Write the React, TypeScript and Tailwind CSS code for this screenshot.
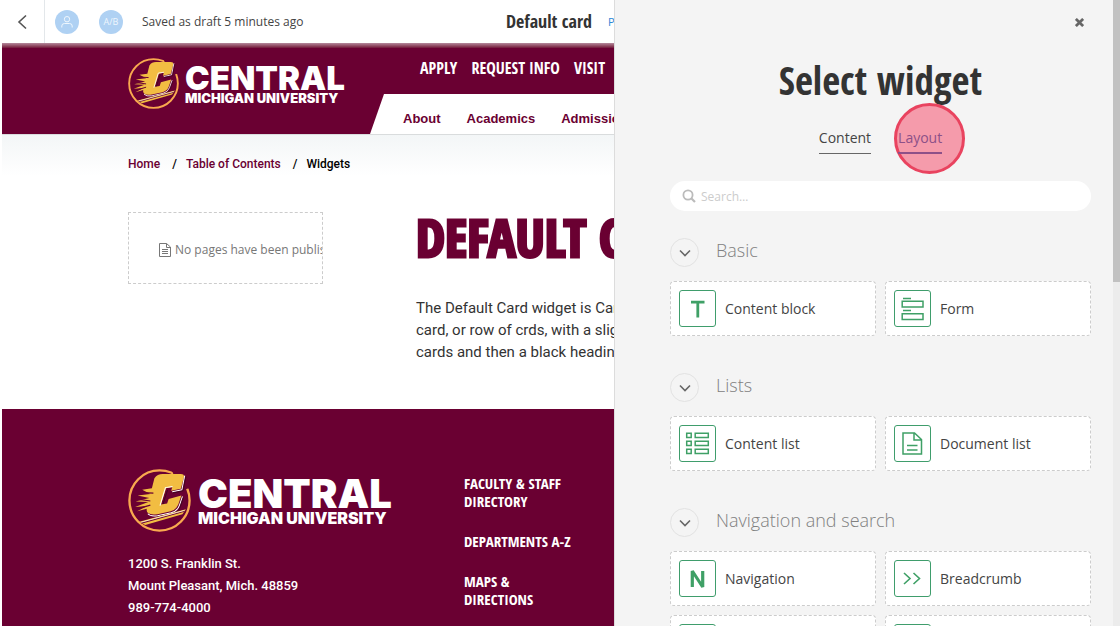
import type { ReactNode } from "react";

const condensed = "font-['Open_Sans_Condensed','Liberation_Sans_Narrow',sans-serif]";

function Emblem({ className }: { className: string }) {
  return (
    <svg viewBox="0 0 62 62" className={className} aria-hidden="true">
      <circle cx="31" cy="31" r="29.6" fill="none" stroke="#f9a94f" strokeWidth="2.3" />
      <path d="M43 0 L58 3 L60 19 L50 22 Z" fill="#6a0032" />
      <path d="M26 9 Q29 5 34 5 H52 Q55.5 5 55 8 L52 19.5 L42.5 21.5 L43.5 18 L37.5 19 L32.5 35 L38.5 34 L40 29.5 L52.5 26 L49.5 35 Q47.5 40 42 41.5 L29 44.5 Q17 46 18.5 39 L9 41.5 L19 36.5 L7 37.5 L20 32.5 L7.5 32 L21 28.5 L9.5 26 L22 24.5 L14 20.5 L23.5 19 Z" fill="#f2bd42" />
      <path d="M55.8 6.5 L53 20.5 L43.5 22.5 M43.8 17.3 L36.8 18.3 L31.5 36 M53.6 27 L50.5 36 Q48.5 41.5 42.5 43 L29 46 Q22 47 19.5 44" fill="none" stroke="#fff" strokeWidth="1" />
      <path d="M57 7.5 L54.2 21.5 L44 23.7 M39 20.5 L34.5 34.5 M54.6 28 L51.5 37 Q49.5 42.8 43 44.3 L29 47.2" fill="none" stroke="#3d0620" strokeWidth="0.9" />
      <path d="M10 23 L25 23.8 M7 29.5 L22 31.5 M10 39 L22 35.5" stroke="#6a0032" strokeWidth="1.2" fill="none" />
      <path d="M11 52 L57 39.5 L53.5 44.5 L17 55 Z" fill="#f2bd42" />
      <path d="M13 53.2 L55.5 41.6" stroke="#6a0032" strokeWidth="1.2" />
      <path d="M13 52.4 L55.5 40.8" stroke="#fff" strokeWidth="0.7" />
    </svg>
  );
}

function BoxIcon({ children }: { children: ReactNode }) {
  return (
    <span className="flex size-[37px] shrink-0 items-center justify-center rounded-[3px] border border-[#3f9d6c] bg-white">
      <svg viewBox="0 0 35 35" className="size-[35px]" fill="none" stroke="#3fa066" aria-hidden="true">
        {children}
      </svg>
    </span>
  );
}

const letterT = <path d="M11 11.2H24.5M17.8 11V26.5" strokeWidth="2.8" />;
const letterN = <path d="M12.3 26V10L22.7 26V10" strokeWidth="3.2" strokeLinejoin="bevel" />;
const form = (
  <>
    <path d="M8 7.5H16M8 19.5H16" strokeWidth="1.3" />
    <path d="M7.2 10.2H28V16H7.2ZM7.2 22.7H28V28.5H7.2Z" strokeWidth="1.5" />
  </>
);
const contentList = (
  <path
    d="M6.7 7.2H11.2V11.5H6.7ZM15.2 7.2H28.3V11.5H15.2ZM6.7 15.2H11.2V19.5H6.7ZM15.2 15.2H28.3V19.5H15.2ZM6.7 23.2H11.2V27.5H6.7ZM15.2 23.2H28.3V27.5H15.2Z"
    strokeWidth="1.5"
  />
);
const documentIcon = (
  <>
    <path d="M8 7H19.5L26.5 13.5V28H8ZM19 7.5V14H26.5" strokeWidth="1.5" />
    <path d="M12 19.5H22.5M12 24H22.5" strokeWidth="1.3" />
  </>
);
const chevrons = <path d="M9 12L15 17.5L9 23M18.5 12L24.5 17.5L18.5 23" strokeWidth="1.6" />;

type Widget = { name: string; icon: ReactNode };
const sections: { title: string; widgets: Widget[] }[] = [
  { title: "Basic", widgets: [{ name: "Content block", icon: letterT }, { name: "Form", icon: form }] },
  { title: "Lists", widgets: [{ name: "Content list", icon: contentList }, { name: "Document list", icon: documentIcon }] },
  {
    title: "Navigation and search",
    widgets: [
      { name: "Navigation", icon: letterN },
      { name: "Breadcrumb", icon: chevrons },
      { name: "", icon: null },
      { name: "", icon: null },
    ],
  },
];

function Toolbar() {
  return (
    <header className="flex h-[43px] items-center whitespace-nowrap bg-white">
      <button aria-label="Back" className="flex h-full w-[45px] shrink-0 items-center justify-center border-r border-[#e3e7ea]">
        <svg viewBox="0 0 10 16" className="h-4 w-[10px]" fill="none" stroke="#555" strokeWidth="1.6" aria-hidden="true">
          <path d="M9 1.5L2 8L9 14.5" />
        </svg>
      </button>
      <button aria-label="Personalization" className="ml-[10px] flex size-6 shrink-0 items-center justify-center rounded-full bg-[#afd1f3]">
        <svg viewBox="0 0 14 14" className="size-[14px]" fill="none" stroke="#eef6fd" strokeWidth="1" aria-hidden="true">
          <circle cx="7" cy="4.2" r="2.7" />
          <path d="M1.8 12.5V11Q1.8 8.5 4.5 8.5H9.5Q12.2 8.5 12.2 11V12.5" />
        </svg>
      </button>
      <button className="ml-5 flex size-6 shrink-0 items-center justify-center rounded-full bg-[#afd1f3] text-[9px] text-[#eef6fd]">A/B</button>
      <p className="ml-[19px] w-[364px] shrink-0 text-[12px] text-[#444]">Saved as draft 5 minutes ago</p>
      <p className={`shrink-0 text-[18px] font-bold text-[#333] ${condensed}`}>Default card</p>
      <a href="#properties" className="ml-4 shrink-0 pt-[2px] text-[11px] text-[#2f86d6]">Properties</a>
    </header>
  );
}

function SiteHeader() {
  return (
    <div className="flex h-[91px] bg-[#6a0032] bg-linear-to-b from-[#b48a9d] to-[#6a0032] to-6% pl-[126px] text-white">
      <a href="#home" className="flex w-[242px] shrink-0 items-start gap-[6px] pt-[15px]">
        <Emblem className="size-[51px] shrink-0" />
        <span className="flex flex-col pt-2 font-['Inter',sans-serif] whitespace-nowrap">
          <span className="text-[33px] leading-[24px] font-black">CENTRAL</span>
          <span className="text-[13px] leading-[16px] font-black">MICHIGAN UNIVERSITY</span>
        </span>
      </a>
      <div className="flex min-w-0 flex-1 flex-col justify-between">
        <nav className={`flex gap-[14px] pt-[14px] pl-[50px] text-[16px] leading-[22px] font-bold whitespace-nowrap ${condensed}`}>
          <a href="#apply">APPLY</a>
          <a href="#info">REQUEST INFO</a>
          <a href="#visit">VISIT</a>
        </nav>
        <nav className="flex h-10 items-center gap-[26px] overflow-hidden bg-white pt-[10px] pl-[33px] font-['Liberation_Sans',sans-serif] text-[13px] font-bold whitespace-nowrap text-[#6a0032] [clip-path:polygon(14px_0,100%_0,100%_100%,0_100%)]">
          <a href="#about">About</a>
          <a href="#academics">Academics</a>
          <a href="#admissions">Admissions</a>
        </nav>
      </div>
    </div>
  );
}

function SiteFooter() {
  return (
    <footer className="flex flex-1 bg-[#6a0032] pt-[60px] pl-[126px] text-white">
      <div className="w-[336px] shrink-0 whitespace-nowrap">
        <a href="#home" className="flex items-start gap-[7px]">
          <Emblem className="size-[63px] shrink-0" />
          <span className="flex flex-col pt-[10px] font-['Inter',sans-serif]">
            <span className="text-[40px] leading-[30px] font-black">CENTRAL</span>
            <span className="text-[16px] leading-[18px] font-black">MICHIGAN UNIVERSITY</span>
          </span>
        </a>
        <address className="mt-[21px] font-['Roboto',sans-serif] text-[13px] leading-[22px] font-medium not-italic">
          1200 S. Franklin St.
          <br />
          Mount Pleasant, Mich. 48859
          <br />
          989-774-4000
        </address>
      </div>
      <nav className={`flex w-[120px] shrink-0 flex-col gap-[22px] pt-[5px] text-[15px] leading-[18px] font-bold ${condensed}`}>
        <a href="#faculty">FACULTY &amp; STAFF DIRECTORY</a>
        <a href="#departments">DEPARTMENTS A-Z</a>
        <a href="#maps">
          MAPS &amp;
          <br />
          DIRECTIONS
        </a>
      </nav>
    </footer>
  );
}

function Preview() {
  return (
    <main className="flex min-w-0 flex-1 flex-col overflow-hidden bg-white">
      <Toolbar />
      <div className="flex flex-1 flex-col pl-[2px]">
        <SiteHeader />
        <div className="h-[275px] shrink-0 border-t border-[#d9dcdd] bg-linear-to-b from-[#f3f6f7] to-white to-15% pl-[126px]">
          <nav aria-label="Breadcrumb" className="flex gap-3 pt-[19px] font-['Roboto',sans-serif] text-[12px] leading-5 font-medium whitespace-nowrap text-[#6a0032]">
            <a href="#home">Home</a>
            <span className="text-black">/</span>
            <a href="#contents" className="-ml-[3px]">Table of Contents</a>
            <span className="text-black">/</span>
            <span className="-ml-[3px] text-black">Widgets</span>
          </nav>
          <div className="mt-[38px] flex items-start gap-[93px]">
            <div className="flex h-[72px] w-[195px] shrink-0 items-center gap-1 overflow-hidden border border-dashed border-[#ccc] pt-1 pl-[30px] text-[12px] whitespace-nowrap text-[#777]">
              <svg viewBox="0 0 12 14" className="h-[14px] w-3 shrink-0" fill="none" stroke="#777" strokeWidth="1" aria-hidden="true">
                <path d="M.5 .5H7.5L11.5 4V13.5H.5ZM7.5 .5V4.5H11.5M3 6.5H9M3 8.5H9M3 10.5H9" />
              </svg>
              <span>No pages have been published</span>
            </div>
            <div className="w-[600px] shrink-0">
              <h1 className={`text-[52px] leading-[50px] font-extrabold text-[#6a0032] [-webkit-text-stroke:3px_#6a0032] ${condensed}`}>DEFAULT CARD</h1>
              <p className="mt-[35px] font-['Roboto',sans-serif] text-[15px] leading-[22px] whitespace-nowrap text-[#333]">
                The Default Card widget is Campus
                <br />
                card, or row of crds, with a slight
                <br />
                cards and then a black heading
              </p>
            </div>
          </div>
        </div>
        <SiteFooter />
      </div>
    </main>
  );
}

function WidgetPanel() {
  return (
    <aside className="flex w-[506px] shrink-0 border-l border-[#dcdcdc] bg-[#f4f4f4]">
      <div className="flex min-w-0 flex-1 flex-col overflow-hidden pr-[22px] pl-[55px]">
        <button aria-label="Close" className="mt-3 mr-[2px] flex size-5 shrink-0 items-center justify-center self-end">
          <svg viewBox="0 0 10 10" className="size-[9px]" stroke="#666" strokeWidth="3" aria-hidden="true">
            <path d="M1 1L9 9M9 1L1 9" />
          </svg>
        </button>
        <h2 className={`mt-[23px] text-center text-[39px] leading-[50px] font-bold text-[#333] ${condensed}`}>Select widget</h2>
        <div role="tablist" className="mt-[23px] flex justify-center gap-[27px] text-[14px] leading-5 text-[#444]">
          <button role="tab" aria-selected="true" className="border-b border-[#666] pb-[5px]">Content</button>
          <button role="tab" aria-selected="false" className="relative isolate text-[#8d5088]">
            <span className="block border-b-2 border-[#8d5088] pb-1">Layout</span>
            <span className="absolute -top-[25px] -left-1 -z-10 size-[71px] rounded-full border-[3px] border-[#e9435f] bg-[#f59bab]" />
          </button>
        </div>
        <label className="mt-[27px] flex h-[30px] shrink-0 items-center gap-[5px] rounded-full bg-white px-3">
          <svg viewBox="0 0 14 14" className="size-[14px] shrink-0" fill="none" stroke="#bbb" strokeWidth="1.8" aria-hidden="true">
            <circle cx="6" cy="6" r="4.6" />
            <path d="M9.5 9.5L13 13" strokeWidth="2.2" />
          </svg>
          <input type="search" aria-label="Search widgets" placeholder="Search…" className="min-w-0 flex-1 bg-transparent pt-px text-[12px] outline-none placeholder:text-[#ccc]" />
        </label>
        {sections.map((section) => (
          <section key={section.title} className="mt-[27px] mb-[10px] shrink-0">
            <div className="flex items-center gap-[17px]">
              <button aria-label={`Collapse ${section.title}`} className="flex size-[29px] items-center justify-center rounded-full border border-[#e2e2e2]">
                <svg viewBox="0 0 12 8" className="h-2 w-3" fill="none" stroke="#666" strokeWidth="1.6" aria-hidden="true">
                  <path d="M1 1.5L6 6.5L11 1.5" />
                </svg>
              </button>
              <h3 className="pb-1 text-[18px] leading-[25px] font-light text-[#808080]">{section.title}</h3>
            </div>
            <div className="mt-[14px] grid grid-cols-2 gap-[9px]">
              {section.widgets.map((widget, index) => (
                <button key={index} className="flex h-[55px] items-center gap-[9px] rounded-[4px] border border-dashed border-[#ccc] bg-white px-2 text-left text-[14px] text-[#444]">
                  <BoxIcon>{widget.icon}</BoxIcon>
                  {widget.name}
                </button>
              ))}
            </div>
          </section>
        ))}
      </div>
      <div className="w-[7px] shrink-0 bg-[#ececec]">
        <div className="h-[45%] bg-[#c1c1c1]" />
      </div>
    </aside>
  );
}

export default function App() {
  return (
    <div className="flex h-screen overflow-hidden bg-white font-['Open_Sans',sans-serif]">
      <Preview />
      <WidgetPanel />
    </div>
  );
}
